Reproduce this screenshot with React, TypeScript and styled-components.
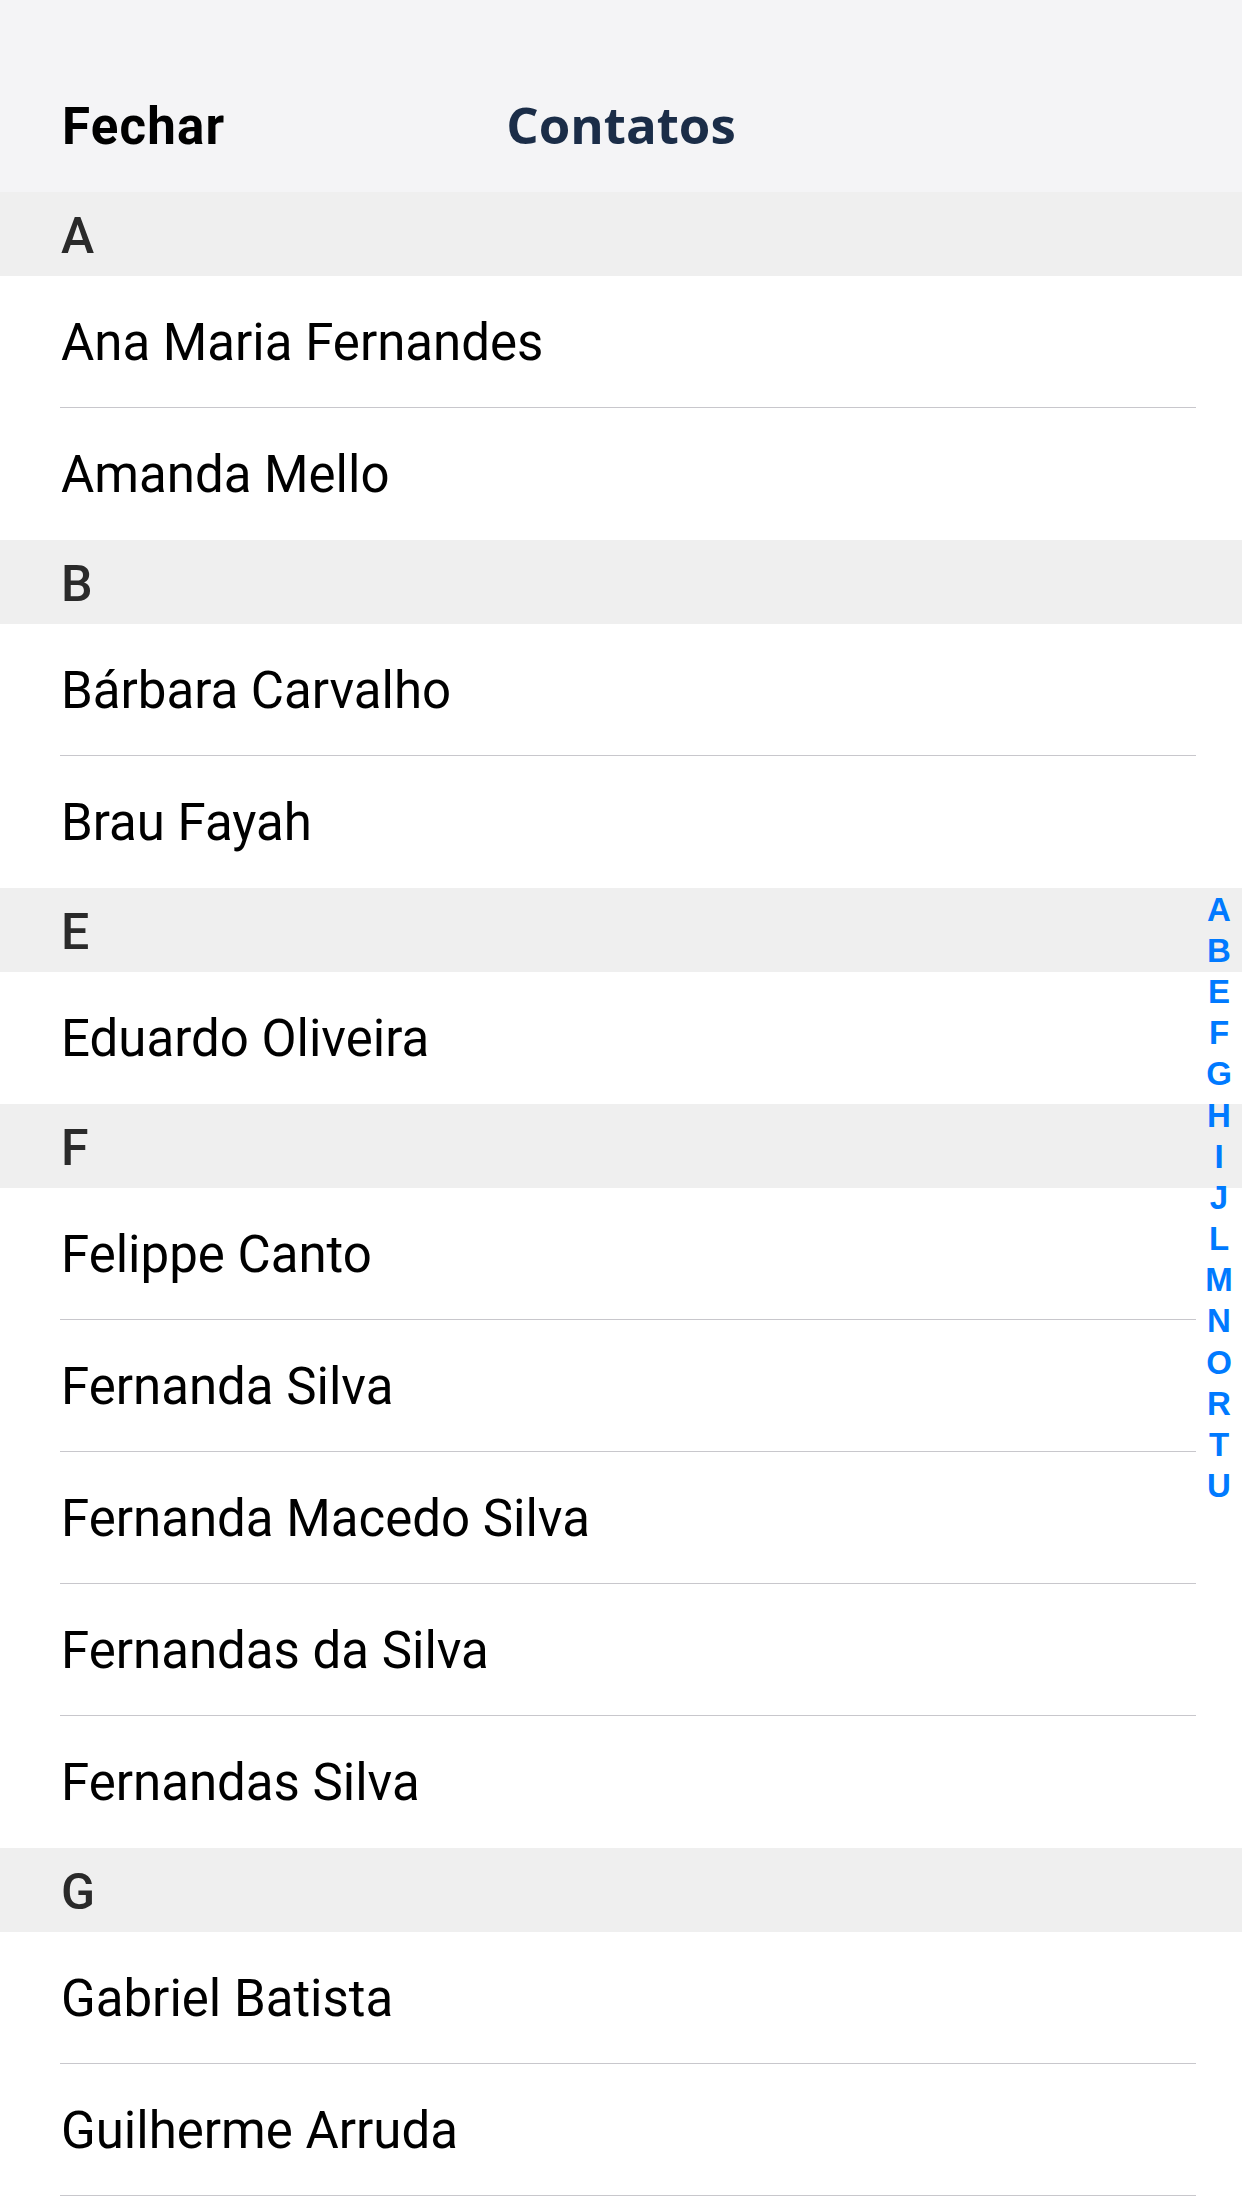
import React from "react";
import styled, { createGlobalStyle } from "styled-components";

const GlobalStyle = createGlobalStyle`
  html, body {
    margin: 0;
    padding: 0;
    background: #ffffff;
  }
  body {
    font-family: Roboto, "Liberation Sans", Arial, sans-serif;
    -webkit-font-smoothing: antialiased;
  }
`;

const Screen = styled.div`
  position: relative;
  width: 1242px;
  min-height: 2208px;
  overflow: hidden;
  background: #ffffff;
`;

const NavBar = styled.header`
  height: 192px;
  box-sizing: border-box;
  padding-top: 60px;
  background: #f4f4f6;
  display: grid;
  grid-template-columns: 1fr auto 1fr;
  align-items: center;
`;

const NavButton = styled.button`
  justify-self: start;
  margin-left: 62px;
  padding: 0;
  border: none;
  background: transparent;
  font-family: Roboto, "Liberation Sans", sans-serif;
  font-weight: 700;
  font-size: 51px;
  letter-spacing: 1.2px;
  color: #000000;
  cursor: pointer;
`;

const Title = styled.h1`
  margin: 0 0 5px;
  font-family: "Open Sans", "Noto Sans", sans-serif;
  font-weight: 700;
  font-size: 51px;
  color: #1b2d48;
`;

const List = styled.div`
  display: flex;
  flex-direction: column;
`;

const SectionHeader = styled.div`
  height: 84px;
  box-sizing: border-box;
  padding: 4px 0 0 61px;
  background: #efefef;
  display: flex;
  align-items: center;
  font-family: Roboto, "Liberation Sans", sans-serif;
  font-weight: 500;
  font-size: 50px;
  color: #2a2a2a;
`;

const Row = styled.div`
  height: 132px;
  padding-left: 60px;
  background: #ffffff;
  display: flex;
`;

const RowInner = styled.div<{ $divider: boolean }>`
  flex: 1;
  margin-right: 46px;
  box-sizing: border-box;
  display: flex;
  align-items: center;
  padding: 2px 0 0 1px;
  border-bottom: 1px solid ${(p) => (p.$divider ? "#c8c7cc" : "transparent")};
  font-family: Roboto, "Liberation Sans", sans-serif;
  font-weight: 400;
  font-size: 51px;
  color: #000000;
`;

const IndexBar = styled.nav`
  position: absolute;
  right: 0;
  top: 889px;
  width: 46px;
  display: flex;
  flex-direction: column;
  align-items: center;
`;

const IndexLetter = styled.span`
  height: 41.2px;
  display: flex;
  align-items: center;
  justify-content: center;
  font-family: "Liberation Sans", Arial, sans-serif;
  font-weight: 700;
  font-size: 33px;
  color: #007aff;
`;

type Section = { letter: string; names: string[]; trailingDivider?: boolean };

const sections: Section[] = [
  { letter: "A", names: ["Ana Maria Fernandes", "Amanda Mello"] },
  { letter: "B", names: ["Bárbara Carvalho", "Brau Fayah"] },
  { letter: "E", names: ["Eduardo Oliveira"] },
  {
    letter: "F",
    names: [
      "Felippe Canto",
      "Fernanda Silva",
      "Fernanda Macedo Silva",
      "Fernandas da Silva",
      "Fernandas Silva",
    ],
  },
  { letter: "G", names: ["Gabriel Batista", "Guilherme Arruda"], trailingDivider: true },
];

const indexLetters = ["A", "B", "E", "F", "G", "H", "I", "J", "L", "M", "N", "O", "R", "T", "U"];

export default function App() {
  return (
    <>
      <GlobalStyle />
      <Screen>
        <NavBar>
          <NavButton>Fechar</NavButton>
          <Title>Contatos</Title>
          <span />
        </NavBar>
        <List>
          {sections.map((s) => (
            <React.Fragment key={s.letter}>
              <SectionHeader>{s.letter}</SectionHeader>
              {s.names.map((n, i) => (
                <Row key={n}>
                  <RowInner $divider={i < s.names.length - 1 || !!s.trailingDivider}>{n}</RowInner>
                </Row>
              ))}
            </React.Fragment>
          ))}
        </List>
        <IndexBar>
          {indexLetters.map((l) => (
            <IndexLetter key={l}>{l}</IndexLetter>
          ))}
        </IndexBar>
      </Screen>
    </>
  );
}
